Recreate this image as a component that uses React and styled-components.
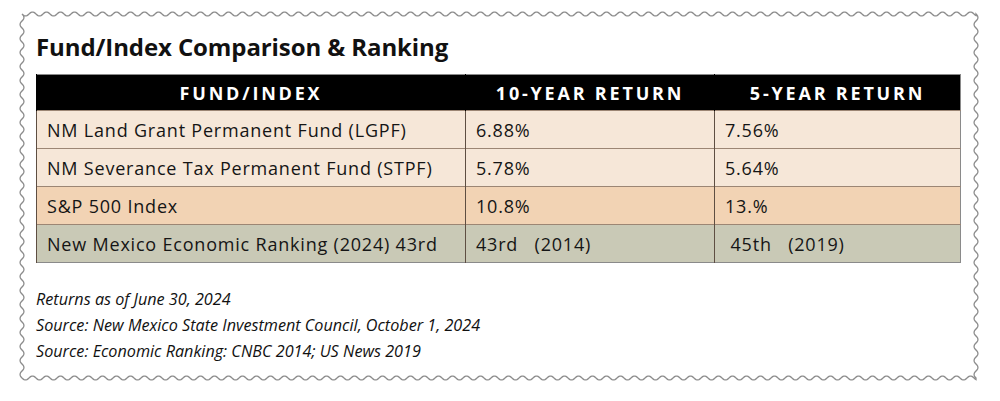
import React from 'react';
import styled, { createGlobalStyle } from 'styled-components';

const GlobalStyle = createGlobalStyle`
  body {
    margin: 0;
    background: #fff;
    font-family: "Open Sans", "Liberation Sans", sans-serif;
    color: #111;
  }
`;

const CARD_W = 954;
const CARD_H = 364;

// builds a wavy outline for the frame, sine along each edge
const wavePath = (w, h, amp = 2, period = 14) => {
  const pts = [];
  for (let x = 0; x <= w; x += 1) pts.push([x, amp * Math.sin((2 * Math.PI * x) / period)]);
  for (let y = 0; y <= h; y += 1) pts.push([w + amp * Math.sin((2 * Math.PI * y) / period), y]);
  for (let x = w; x >= 0; x -= 1) pts.push([x, h + amp * Math.sin((2 * Math.PI * x) / period)]);
  for (let y = h; y >= 0; y -= 1) pts.push([amp * Math.sin((2 * Math.PI * y) / period), y]);
  return 'M' + pts.map(([x, y]) => `${x.toFixed(1)},${y.toFixed(1)}`).join(' L') + ' Z';
};

const rows = [
  { name: 'NM Land Grant Permanent Fund (LGPF)', ten: '6.88%', five: '7.56%', tone: 'light' },
  { name: 'NM Severance Tax Permanent Fund (STPF)', ten: '5.78%', five: '5.64%', tone: 'light' },
  { name: 'S&P 500 Index', ten: '10.8%', five: '13.%', tone: 'peach' },
  { name: 'New Mexico Economic Ranking (2024) 43rd', ten: '43rd   (2014)', five: ' 45th   (2019)', tone: 'sage' },
];

const tones = {
  light: '#f6e7d8',
  peach: '#f2d3b4',
  sage: '#c9c9b6',
};

const App = () => {
  return (
    <Page>
      <GlobalStyle />
      <Card>
        <Frame width={CARD_W} height={CARD_H} viewBox={`0 0 ${CARD_W} ${CARD_H}`}>
          <path d={wavePath(CARD_W, CARD_H)} fill="none" stroke="#8c8c8c" strokeWidth="1.3" />
        </Frame>
        <Title>Fund/Index Comparison &amp; Ranking</Title>
        <Table>
          <thead>
            <tr>
              <HeadCell $w={428}>FUND/INDEX</HeadCell>
              <HeadCell $w={248}>10-YEAR RETURN</HeadCell>
              <HeadCell>5-YEAR RETURN</HeadCell>
            </tr>
          </thead>
          <tbody>
            {rows.map((r) => (
              <Row key={r.name} $bg={tones[r.tone]}>
                <Cell>{r.name}</Cell>
                <Cell>{r.ten}</Cell>
                <Cell>{r.five}</Cell>
              </Row>
            ))}
          </tbody>
        </Table>
        <Notes>
          <Note>Returns as of June 30, 2024</Note>
          <Note>Source: New Mexico State Investment Council, October 1, 2024</Note>
          <Note>Source: Economic Ranking: CNBC 2014; US News 2019</Note>
        </Notes>
      </Card>
    </Page>
  );
};

const Page = styled.div`
  width: 1000px;
  height: 401px;
  padding: 14px 0 0 22px;
  box-sizing: border-box;
`;

const Card = styled.div`
  position: relative;
  width: ${CARD_W}px;
  height: ${CARD_H}px;
  box-sizing: border-box;
  padding: 18px 15px 0 14px;
  display: flex;
  flex-direction: column;
`;

const Frame = styled.svg`
  position: absolute;
  left: 0;
  top: 0;
  overflow: visible;
  pointer-events: none;
`;

const Title = styled.h2`
  margin: 0 0 12px;
  font-size: 24px;
  line-height: 30px;
  font-weight: 700;
  letter-spacing: -0.1px;
  color: #111;
`;

const Table = styled.table`
  width: 925px;
  border-collapse: collapse;
  border: 1px solid #8a8a8a;
  table-layout: fixed;
`;

const HeadCell = styled.th`
  width: ${(p) => (p.$w ? `${p.$w}px` : 'auto')};
  height: 35px;
  padding: 0;
  background: #000;
  color: #fff;
  font-size: 18px;
  font-weight: 700;
  letter-spacing: 2.8px;
  text-align: center;
  border-left: 1px solid #000;
`;

const Row = styled.tr`
  background: ${(p) => p.$bg};
  border-top: 1px solid #9c8674;
`;

const Cell = styled.td`
  height: 37px;
  padding: 0 10px;
  font-size: 18px;
  letter-spacing: 0.8px;
  color: #151515;
  white-space: pre;
  border-left: 1px solid #5e4e42;
`;

const Notes = styled.div`
  margin-top: 23px;
  display: flex;
  flex-direction: column;
`;

const Note = styled.div`
  font-size: 16.2px;
  line-height: 26px;
  font-style: italic;
  color: #111;
`;

export default App;
